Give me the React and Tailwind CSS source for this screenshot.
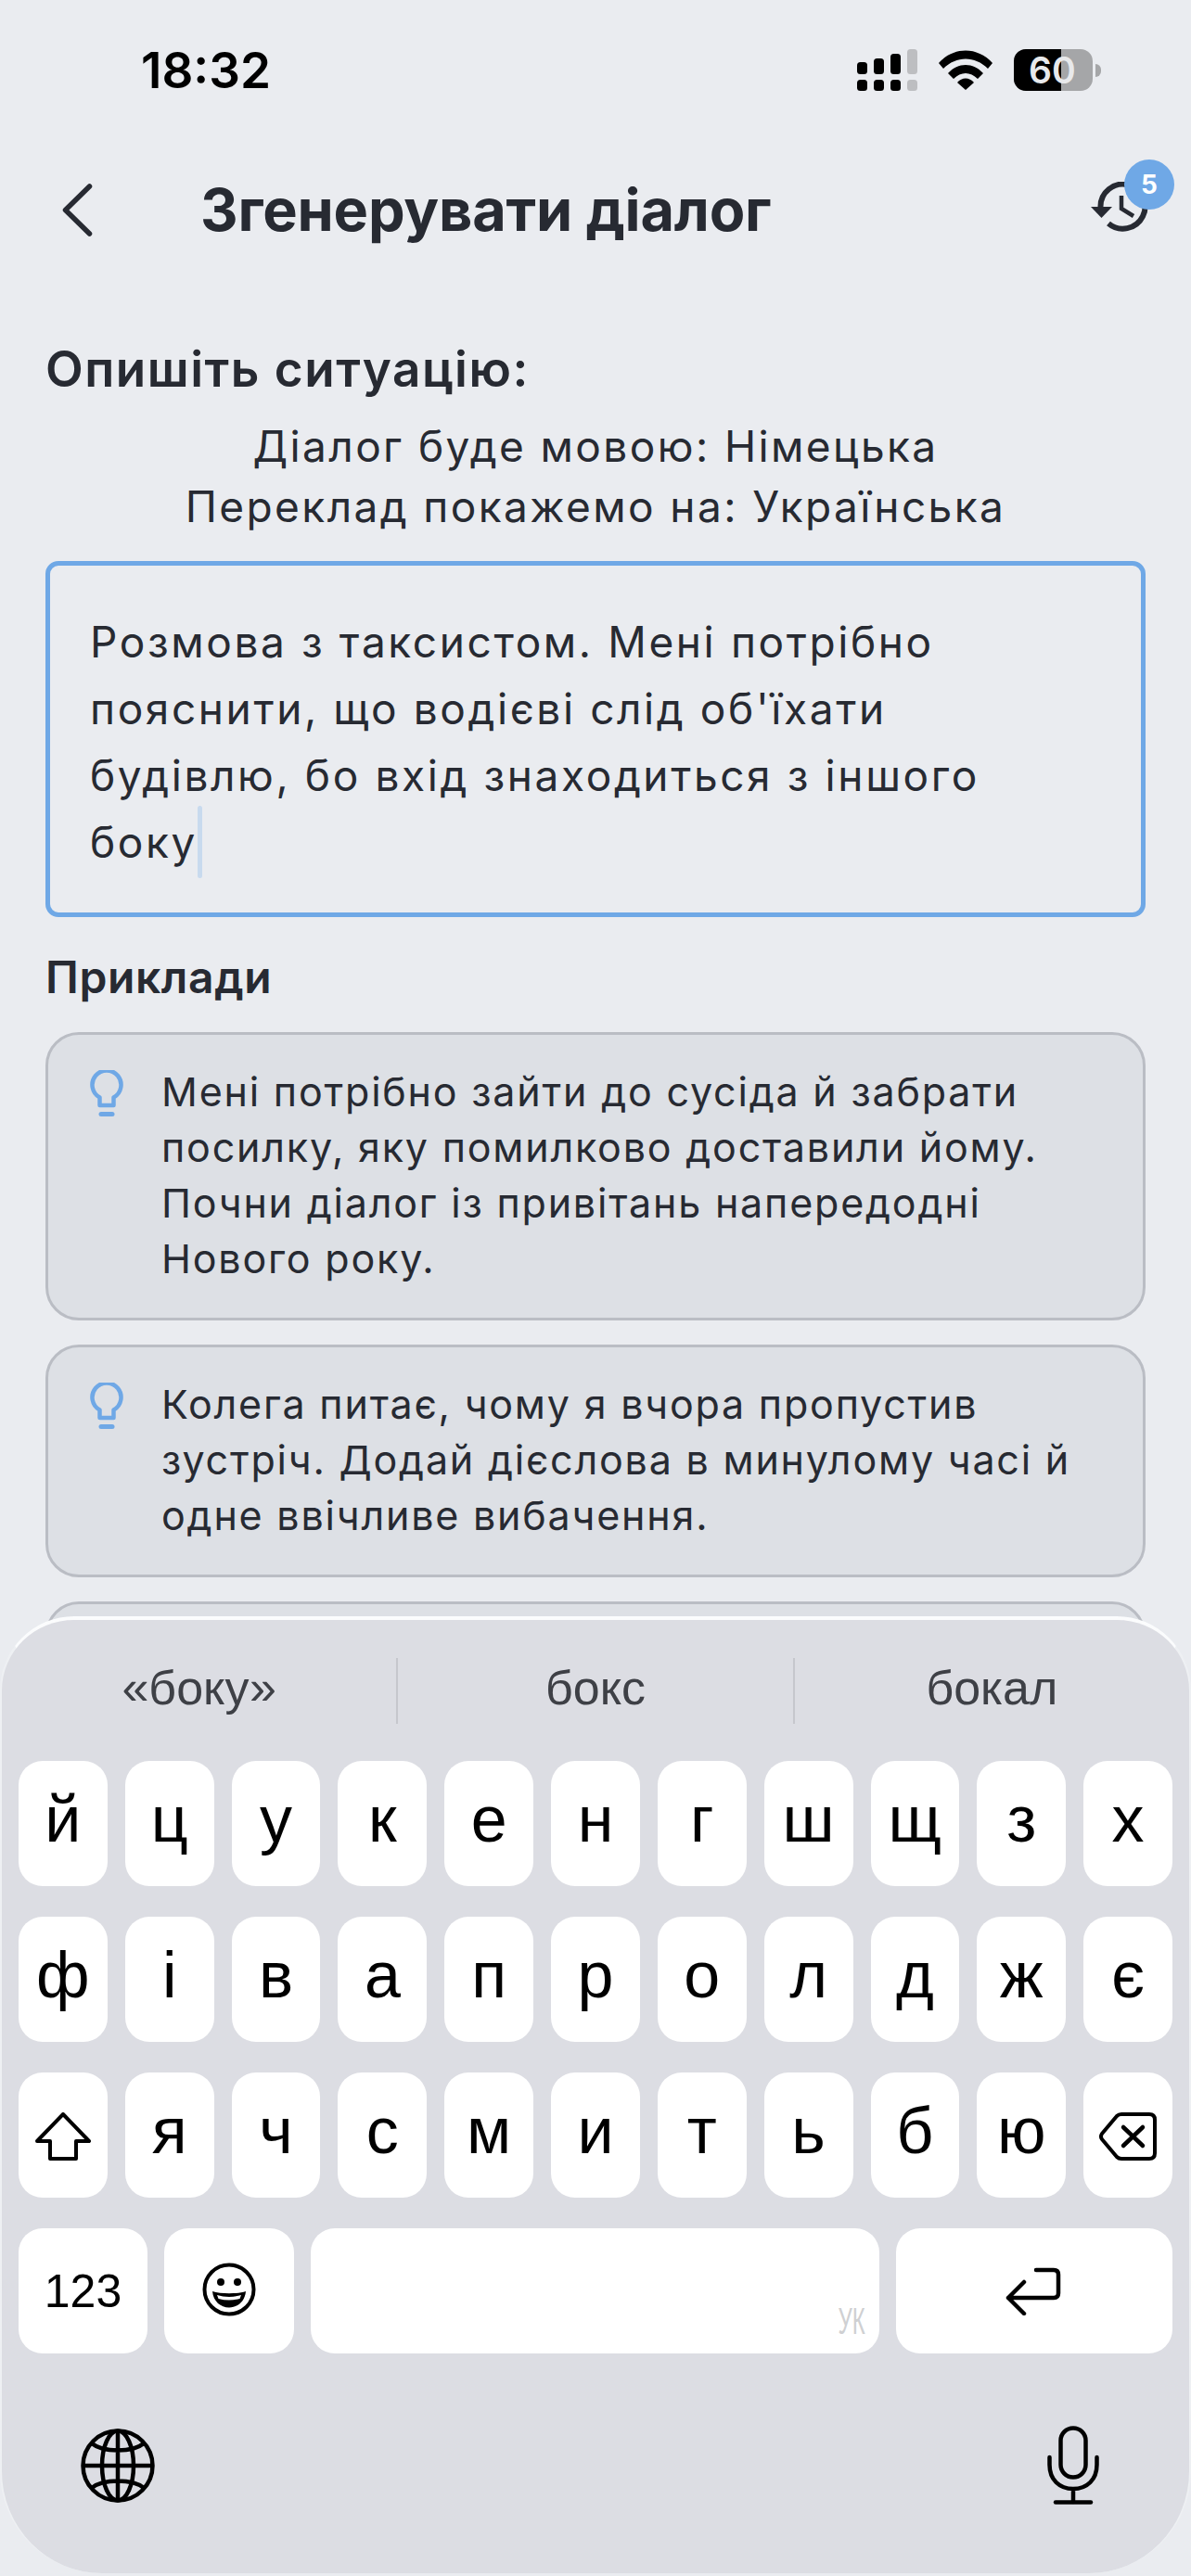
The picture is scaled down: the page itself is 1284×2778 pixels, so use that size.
const row1 = ['й', 'ц', 'у', 'к', 'е', 'н', 'г', 'ш', 'щ', 'з', 'х'];
const row2 = ['ф', 'і', 'в', 'а', 'п', 'р', 'о', 'л', 'д', 'ж', 'є'];
const row3 = ['я', 'ч', 'с', 'м', 'и', 'т', 'ь', 'б', 'ю'];

const examples = [
  ['Мені потрібно зайти до сусіда й забрати', 'посилку, яку помилково доставили йому.', 'Почни діалог із привітань напередодні', 'Нового року.'],
  ['Колега питає, чому я вчора пропустив', 'зустріч. Додай дієслова в минулому часі й', 'одне ввічливе вибачення.'],
];

function Signal() {
  return (
    <svg width="65" height="45" viewBox="0 0 65 45">
      <rect x="0" y="14" width="11" height="13" rx="3.5" fill="#000" />
      <rect x="18" y="10" width="11" height="17" rx="3.5" fill="#000" />
      <rect x="36" y="5" width="11" height="22" rx="3.5" fill="#000" />
      <rect x="54" y="0" width="11" height="27" rx="3.5" fill="#bdbec1" />
      <rect x="0" y="33" width="11" height="12" rx="3.5" fill="#000" />
      <rect x="18" y="33" width="11" height="12" rx="3.5" fill="#000" />
      <rect x="36" y="33" width="11" height="12" rx="3.5" fill="#000" />
      <rect x="54" y="33" width="11" height="12" rx="3.5" fill="#bdbec1" />
    </svg>
  );
}

function Wifi() {
  return (
    <svg width="58" height="43" viewBox="0 0 58 43">
      <path d="M0 14 C16 -4 42 -4 58 14 L53 20 C39 6 19 6 5 20 Z" fill="#000" />
      <path d="M10 25 C21 13 37 13 48 25 L42 31 C34 23 24 23 16 31 Z" fill="#000" />
      <path d="M20 35 C25 29 33 29 38 35 L29 43 Z" fill="#000" />
    </svg>
  );
}

function Battery() {
  return (
    <div className="relative flex h-[45px] w-[94px] items-center">
      <div className="relative h-[45px] w-[85px] overflow-hidden rounded-[13px] bg-[#a5a6a8]">
        <div className="h-full w-[51px] bg-black" />
      </div>
      <div className="h-[14px] w-[6px] rounded-r-[6px] bg-[#a5a6a8] ml-[3px]" />
      <span className="absolute left-[16px] top-0 text-[39px] leading-[45px] font-semibold text-[#e8e9eb] font-['Inter',sans-serif]">60</span>
    </div>
  );
}

function BackIcon() {
  return (
    <svg width="33" height="57" viewBox="0 0 33 57" fill="none" className="shrink-0">
      <path d="M29.5 3 L3.5 28.5 L29.5 54" stroke="#272a32" strokeWidth="5.5" strokeLinecap="round" strokeLinejoin="round" />
    </svg>
  );
}

function HistoryIcon() {
  return (
    <svg width="62" height="56" viewBox="0 0 62 56" fill="none">
      <path d="M10.5 27 A24 24 0 1 1 19 45" stroke="#272a32" strokeWidth="6" />
      <path d="M0 27 L23 27 L11.5 39 Z" fill="#272a32" />
      <path d="M33 15 L33 29 L46 37" stroke="#272a32" strokeWidth="4.5" />
    </svg>
  );
}

function Bulb() {
  return (
    <svg width="36" height="51" viewBox="0 0 36 51" fill="none" className="shrink-0">
      <path d="M10.5 29.5 A15.5 15.5 0 1 1 25.5 29.5 V38 H10.5 Z" stroke="#6fa8e6" strokeWidth="4.5" strokeLinejoin="round" />
      <path d="M12 47.5 H24" stroke="#6fa8e6" strokeWidth="5" strokeLinecap="round" />
    </svg>
  );
}

function Key({ children, className = 'flex-1 pb-[10px] text-[70px]' }) {
  return (
    <div className={`flex h-[135px] items-center justify-center rounded-[26px] bg-white leading-none text-black ${className}`}>
      {children}
    </div>
  );
}

function ShiftIcon() {
  return (
    <svg width="60" height="52" viewBox="0 0 60 52" fill="none" className="mt-[3px]">
      <path d="M30 2 L58 31 L44 31 L44 50 L16 50 L16 31 L2 31 Z" stroke="#000" strokeWidth="4" strokeLinejoin="round" />
    </svg>
  );
}

function DeleteIcon() {
  return (
    <svg width="62" height="52" viewBox="0 0 62 52" fill="none" className="mt-[3px]">
      <path d="M24 2 L54 2 Q60 2 60 8 L60 44 Q60 50 54 50 L24 50 Q21 50 19 48 L3 29 Q1 26 3 23 L19 4 Q21 2 24 2 Z" stroke="#000" strokeWidth="4" strokeLinejoin="round" />
      <path d="M26 16 L47 36 M47 16 L26 36" stroke="#000" strokeWidth="4.5" strokeLinecap="round" />
    </svg>
  );
}

function EmojiIcon() {
  return (
    <svg width="58" height="58" viewBox="0 0 58 58" fill="none" className="-mt-[4px]">
      <circle cx="29" cy="29" r="26.5" stroke="#000" strokeWidth="4" />
      <circle cx="20" cy="21" r="4" fill="#000" />
      <circle cx="38" cy="21" r="4" fill="#000" />
      <path d="M11 31 C20 34 38 34 47 31 C46 42 38 48.5 29 48.5 C20 48.5 12 42 11 31 Z" fill="#000" />
      <path d="M16 35 C24 37.5 34 37.5 42 35 L40.5 39 C33 41 25 41 17.5 39 Z" fill="#fff" />
    </svg>
  );
}

function ReturnIcon() {
  return (
    <svg width="60" height="52" viewBox="0 0 60 52" fill="none" className="ml-[-2px]">
      <path d="M33 3 L52 3 Q57 3 57 8 L57 28 Q57 33 52 33 L3 33 M20 16 L3 33 L20 50" stroke="#000" strokeWidth="4.5" strokeLinecap="round" strokeLinejoin="round" />
    </svg>
  );
}

function GlobeIcon() {
  return (
    <svg width="80" height="80" viewBox="0 0 80 80" fill="none" stroke="#000" strokeWidth="4.5">
      <circle cx="40" cy="40" r="37.5" />
      <ellipse cx="40" cy="40" rx="17" ry="37.5" />
      <path d="M40 2.5 V77.5 M2.5 40 H77.5 M12 16 C24 26 56 26 68 16 M12 64 C24 54 56 54 68 64" />
    </svg>
  );
}

function MicIcon() {
  return (
    <svg width="56" height="85" viewBox="0 0 56 85" fill="none" stroke="#000" strokeWidth="4.5" strokeLinecap="round">
      <rect x="14.5" y="2.5" width="27" height="53" rx="13.5" />
      <path d="M2.5 34 V42 C2.5 58 13 68 28 68 C43 68 53.5 58 53.5 42 V34 M28 68 V82" />
      <path d="M9 82.5 H47" />
    </svg>
  );
}

function Keyboard() {
  return (
    <div className="absolute bottom-[3px] left-0 right-0 h-[1032px] rounded-t-[80px] rounded-b-[110px] border-t-[4px] border-x-[2px] border-x-[#eef0f3] border-t-[#fbfcfd] border-b-0 bg-[#dcdde3] font-['Liberation_Sans',sans-serif]">
      <div className="flex h-[152px] items-center text-[52px] text-[#3e4046]">
        <div className="flex-1 text-center pb-[6px]">«боку»</div>
        <div className="h-[71px] w-[2px] bg-[#c6c7cd]" />
        <div className="flex-1 text-center pb-[6px]">бокс</div>
        <div className="h-[71px] w-[2px] bg-[#c6c7cd]" />
        <div className="flex-1 text-center pb-[6px]">бокал</div>
      </div>
      <div className="flex flex-col gap-[33px] px-[18px]">
        <div className="flex gap-[19px]">
          {row1.map((k) => <Key key={k}>{k}</Key>)}
        </div>
        <div className="flex gap-[19px]">
          {row2.map((k) => <Key key={k}>{k}</Key>)}
        </div>
        <div className="flex gap-[19px]">
          <Key className="flex-1"><ShiftIcon /></Key>
          {row3.map((k) => <Key key={k}>{k}</Key>)}
          <Key className="flex-1"><DeleteIcon /></Key>
        </div>
        <div className="flex gap-[18px]">
          <Key className="w-[139px] text-[50px]">123</Key>
          <Key className="w-[140px]"><EmojiIcon /></Key>
          <div className="relative h-[135px] w-[613px] rounded-[26px] bg-white">
            <span className="absolute bottom-[15px] right-[15px] origin-right scale-x-[0.6] text-[40px] leading-none text-[#cfd0d2]">УК</span>
          </div>
          <Key className="flex-1"><ReturnIcon /></Key>
        </div>
      </div>
      <div className="flex items-center justify-between pl-[85px] pr-[97px] pt-[78px]">
        <GlobeIcon />
        <MicIcon />
      </div>
    </div>
  );
}

export default function App() {
  return (
    <div className="relative h-[2778px] w-[1284px] overflow-hidden bg-[#eaecf0] font-['Inter',sans-serif] text-[#272a32]">
      {/* Status bar */}
      <div className="flex h-[152px] items-start justify-between pl-[152px] pr-[97px] pt-[53px]">
        <span className="text-[53px] leading-[46px] font-semibold text-black">18:32</span>
        <div className="flex items-center gap-[23px]">
          <Signal />
          <Wifi />
          <Battery />
        </div>
      </div>

      {/* Header */}
      <div className="flex h-[148px] items-center pl-[67px] pr-[46px]">
        <BackIcon />
        <h1 className="ml-[116px] flex-1 text-[63px] leading-none font-bold tracking-[-0.2px]">Згенерувати діалог</h1>
        <div className="relative h-[56px] w-[62px] -mt-[4px]">
          <HistoryIcon />
          <div className="absolute -right-[28px] -top-[24px] flex h-[54px] w-[54px] items-center justify-center rounded-full bg-[#6fa8e6] text-[28px] font-bold text-white">5</div>
        </div>
      </div>

      {/* Form */}
      <div className="px-[49px] pt-[68px]">
        <h2 className="text-[53px] leading-[60px] font-semibold tracking-[1.5px]">Опишіть ситуацію:</h2>
        <div className="mt-[21px] text-center text-[46px] leading-[65px] tracking-[2.4px]">
          <p>Діалог буде мовою: Німецька</p>
          <p>Переклад покажемо на: Українська</p>
        </div>
        <div className="mt-[26px] h-[384px] rounded-[14px] border-[5px] border-[#6fa8e6] pl-[43px] pt-[46px] text-[46px] leading-[72px] tracking-[2.6px]">
          <p>Розмова з таксистом. Мені потрібно</p>
          <p>пояснити, що водієві слід об'їхати</p>
          <p>будівлю, бо вхід знаходиться з іншого</p>
          <p className="flex items-center">боку<span className="-my-[3px] h-[78px] w-[5px] rounded-full bg-[#c8daee]" /></p>
        </div>

        <h3 className="mt-[37px] text-[48px] leading-[56px] font-semibold tracking-[0.6px]">Приклади</h3>
        <div className="mt-[31px] flex flex-col gap-[26px]">
          {examples.map((lines, i) => (
            <div key={i} className="flex gap-[41px] rounded-[36px] border-[3px] border-[#babdc4] bg-[#dde0e5] pb-[34px] pl-[45px] pt-[31px]">
              <div className="pt-[7px]"><Bulb /></div>
              <div className="text-[43px] leading-[60px] tracking-[1.8px]">
                {lines.map((l) => <p key={l}>{l}</p>)}
              </div>
            </div>
          ))}
          <div className="h-[200px] rounded-[36px] border-[3px] border-[#babdc4] bg-[#dde0e5]" />
        </div>
      </div>

      <Keyboard />
    </div>
  );
}
